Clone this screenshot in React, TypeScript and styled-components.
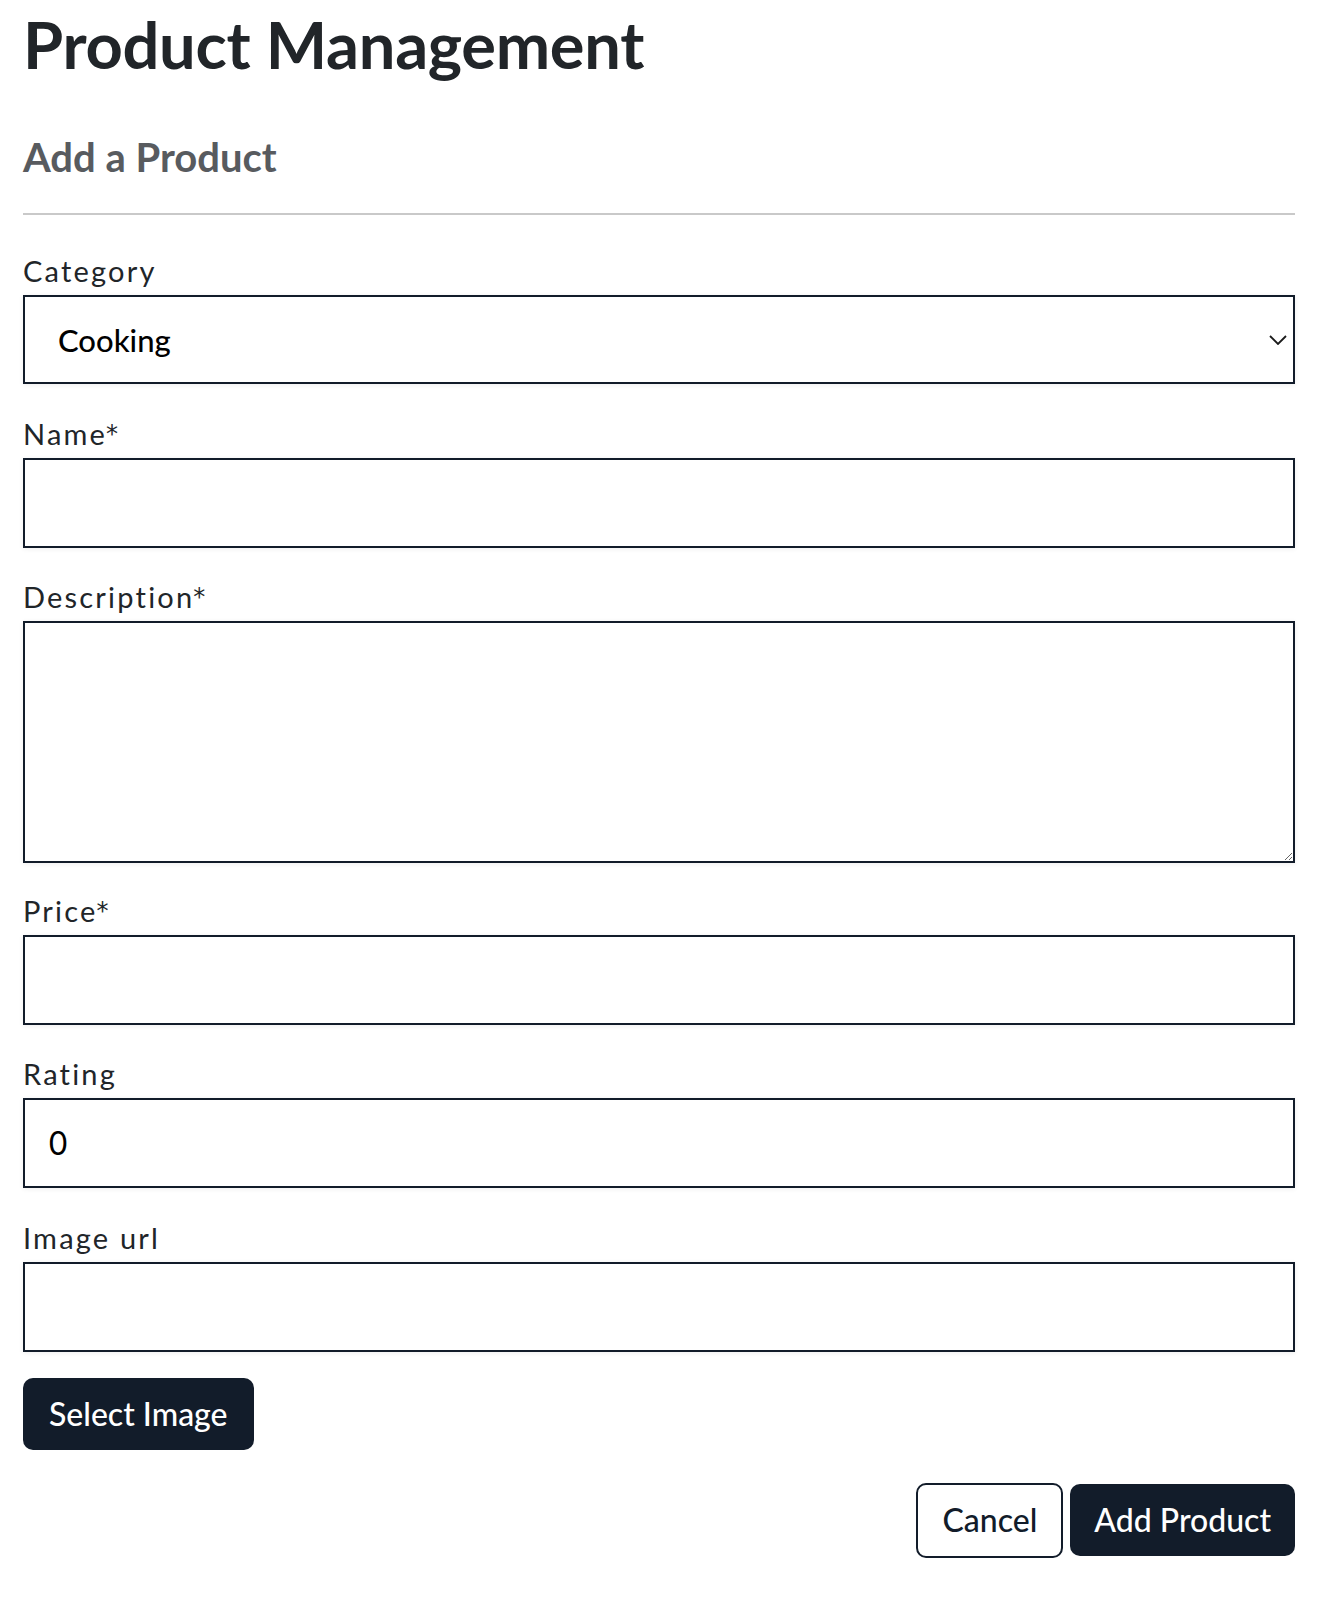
import React from "react";
import styled, { createGlobalStyle } from "styled-components";

const GlobalStyle = createGlobalStyle`
  html, body {
    margin: 0;
    padding: 0;
    background: #ffffff;
  }
  body {
    font-family: Lato, "Noto Sans", sans-serif;
    color: #212529;
  }
  * { box-sizing: border-box; }
`;

const Page = styled.div`
  padding: 5px 35px 40px 23px;
`;

const Title = styled.h1`
  margin: 0;
  font-family: Lato, "Noto Sans", sans-serif;
  font-weight: 700;
  font-size: 65px;
  line-height: 78px;
  color: #212529;
  letter-spacing: -0.3px;
`;

const Subtitle = styled.h2`
  margin: 50px 0 0;
  font-family: Lato, "Noto Sans", sans-serif;
  font-weight: 700;
  font-size: 40px;
  line-height: 48px;
  color: #585b5f;
`;

const Divider = styled.hr`
  margin: 32px 0 0;
  border: 0;
  height: 2px;
  background: #c9c9c9;
`;

const Form = styled.form`
  display: flex;
  flex-direction: column;
  padding-top: 38px;
`;

const Field = styled.div<{ $gap?: number }>`
  display: flex;
  flex-direction: column;
  margin-bottom: ${({ $gap }) => ($gap ?? 31.6)}px;
`;

const Label = styled.label`
  font-family: Lato, "Noto Sans", sans-serif;
  font-size: 29px;
  line-height: 36px;
  height: 36px;
  font-weight: 400;
  letter-spacing: 2.2px;
  color: #212529;
  margin-bottom: 6px;
`;

const Required = styled.span`
  font-family: "DejaVu Sans", sans-serif;
  font-size: 24px;
  line-height: 0;
  letter-spacing: 0;
  position: relative;
  top: -3px;
  margin-left: -1px;
`;

const boxCss = `
  width: 100%;
  border: 2px solid #121c2a;
  border-radius: 0;
  background: #ffffff;
  box-shadow: 0 1px 5px rgba(0, 0, 0, 0.07);
  outline: none;
  color: #000000;
`;

const TextInput = styled.input`
  ${boxCss}
  height: 90px;
  padding: 0 23px;
  font-family: Inter, "Liberation Sans", Arial, sans-serif;
  font-size: 32px;
`;

const TextArea = styled.textarea`
  ${boxCss}
  height: 242px;
  padding: 20px 23px;
  font-family: Inter, "Liberation Sans", Arial, sans-serif;
  font-size: 32px;
  resize: both;
  display: block;
`;

const SelectWrap = styled.div`
  position: relative;
  width: 100%;
`;

const Select = styled.select`
  ${boxCss}
  height: 89px;
  padding: 0 60px 0 33px;
  appearance: none;
  -webkit-appearance: none;
  font-family: Lato, "Noto Sans", sans-serif;
  font-size: 31px;
  font-weight: 500;
  color: #000000;
`;

const Chevron = styled.svg`
  position: absolute;
  right: 8px;
  top: 50%;
  transform: translateY(-50%);
  width: 18px;
  height: 10px;
  pointer-events: none;
`;

const Button = styled.button<{ $variant?: "primary" | "outline" }>`
  font-family: Lato, "Noto Sans", sans-serif;
  font-size: 32px;
  font-weight: 500;
  border-radius: 10px;
  cursor: pointer;
  padding: 0 24px;
  line-height: 1;
  ${({ $variant }) =>
    $variant === "outline"
      ? `
    height: 75px;
    background: #ffffff;
    color: #121c2a;
    border: 2px solid #121c2a;
  `
      : `
    height: 72px;
    background: #121c2a;
    color: #ffffff;
    border: 0;
  `}
`;

const SelectImageButton = styled(Button)`
  padding: 0 26px;
`;

const SelectImageRow = styled.div`
  display: flex;
  margin-top: -6px;
`;

const Actions = styled.div`
  display: flex;
  justify-content: flex-end;
  align-items: center;
  gap: 7px;
  margin-top: 33px;
`;

export default function App() {
  return (
    <>
      <GlobalStyle />
      <Page>
        <Title>Product Management</Title>
        <Subtitle>Add a Product</Subtitle>
        <Divider />
        <Form onSubmit={(e) => e.preventDefault()}>
          <Field>
            <Label htmlFor="category">Category</Label>
            <SelectWrap>
              <Select id="category" defaultValue="Cooking">
                <option>Cooking</option>
                <option>Cleaning</option>
                <option>Gardening</option>
              </Select>
              <Chevron viewBox="0 0 18 10" fill="none">
                <path d="M1 1 L9 9 L17 1" stroke="#1a1a1a" strokeWidth="1.8" />
              </Chevron>
            </SelectWrap>
          </Field>
          <Field>
            <Label htmlFor="name">
              Name<Required>*</Required>
            </Label>
            <TextInput id="name" type="text" />
          </Field>
          <Field $gap={29.6}>
            <Label htmlFor="description">
              Description<Required>*</Required>
            </Label>
            <TextArea id="description" />
          </Field>
          <Field>
            <Label htmlFor="price">
              Price<Required>*</Required>
            </Label>
            <TextInput id="price" type="text" />
          </Field>
          <Field>
            <Label htmlFor="rating">Rating</Label>
            <TextInput id="rating" type="text" defaultValue="0" />
          </Field>
          <Field>
            <Label htmlFor="image">Image url</Label>
            <TextInput id="image" type="text" />
          </Field>
          <SelectImageRow>
            <SelectImageButton type="button">Select Image</SelectImageButton>
          </SelectImageRow>
          <Actions>
            <Button type="button" $variant="outline">Cancel</Button>
            <Button type="submit">Add Product</Button>
          </Actions>
        </Form>
      </Page>
    </>
  );
}
